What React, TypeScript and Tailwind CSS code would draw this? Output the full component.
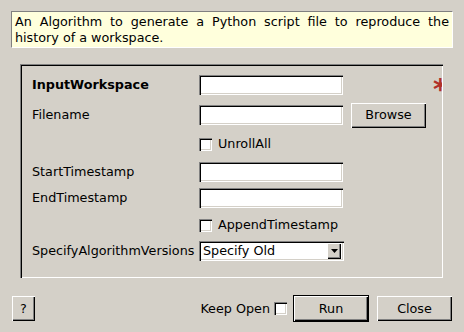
import React from 'react';

const sunken =
  'shadow-[inset_1px_1px_0_#808080,inset_2px_2px_0_#000000,inset_-1px_-1px_0_#ffffff,inset_-2px_-2px_0_#d4d0c8]';
const raised =
  'shadow-[inset_1px_1px_0_#ffffff,inset_-1px_-1px_0_#000000,inset_-2px_-2px_0_#808080]';

function TextBox() {
  return <div className={`w-[144px] h-[20px] bg-white ${sunken}`} />;
}

function CheckBox() {
  return <div className={`w-[13px] h-[13px] bg-white shrink-0 ${sunken}`} />;
}

function Button({ label, className = '' }: { label: string; className?: string }) {
  return (
    <div className={`h-[25px] flex items-center justify-center bg-[#d4d0c8] ${raised} ${className}`}>
      {label}
    </div>
  );
}

function Row({ h, label, bold, children }: { h: string; label?: string; bold?: boolean; children?: React.ReactNode }) {
  return (
    <div className={`flex items-center ${h}`}>
      <div className={`w-[167px] shrink-0 ${bold ? 'font-bold' : ''}`}>{label}</div>
      {children}
    </div>
  );
}

export default function App() {
  return (
    <div
      className="w-[464px] h-[332px] bg-[#d4d0c8] text-[12.75px] text-black overflow-hidden pt-[11px] px-[11px]"
      style={{ fontFamily: '"DejaVu Sans", sans-serif' }}
    >
      {/* description */}
      <div className="h-[37px] bg-[#ffffdc] border-t border-l border-[#808080] border-r-white border-b-white border-r border-b pl-[3px] pr-[3px] pt-[2px] leading-[16px] text-justify">
        An Algorithm to generate a Python script file to reproduce the history of a workspace.
      </div>

      {/* property group */}
      <div className={`relative mt-[16px] ml-[9px] mr-[10px] h-[214px] pt-[8px] pl-[12px] ${sunken}`}>
        <Row h="h-[26px]" label="InputWorkspace" bold>
          <TextBox />
        </Row>
        <Row h="h-[34px]" label="Filename">
          <TextBox />
          <Button label="Browse" className="w-[75px] ml-[8px]" />
        </Row>
        <Row h="h-[24px]">
          <CheckBox />
          <span className="ml-[6px]">UnrollAll</span>
        </Row>
        <Row h="h-[31px]" label="StartTimestamp">
          <TextBox />
        </Row>
        <Row h="h-[22px]" label="EndTimestamp">
          <TextBox />
        </Row>
        <Row h="h-[32px]">
          <CheckBox />
          <span className="ml-[6px]">AppendTimestamp</span>
        </Row>
        <Row h="h-[20px]" label="SpecifyAlgorithmVersions">
          <div className={`w-[145px] h-[20px] bg-white flex items-center pl-[4px] pr-[3px] ${sunken}`}>
            <span className="flex-1">Specify Old</span>
            <div className={`w-[14px] h-[16px] bg-[#d4d0c8] flex items-center justify-center ${raised}`}>
              <svg width="7" height="4" viewBox="0 0 7 4">
                <path d="M0 0h7L3.5 4z" fill="#000" />
              </svg>
            </div>
          </div>
        </Row>
        {/* required marker, clipped by the frame edge */}
        <div className="absolute left-[413px] top-[12px] w-[9px] h-[22px] overflow-hidden">
          <span className="block text-[28px] leading-[28px] font-bold text-[#b0302a]">*</span>
        </div>
      </div>

      {/* footer */}
      <div className="mt-[17px] flex items-center justify-between pl-[1px] pr-[1px]">
        <Button label="?" className="w-[23px]" />
        <div className="flex items-center">
          <span>Keep Open</span>
          <div className="ml-[4px]"><CheckBox /></div>
          <div className="ml-[6px] border border-black">
            <Button label="Run" className="w-[74px] h-[23px]" />
          </div>
          <Button label="Close" className="w-[75px] ml-[8px]" />
        </div>
      </div>
    </div>
  );
}
